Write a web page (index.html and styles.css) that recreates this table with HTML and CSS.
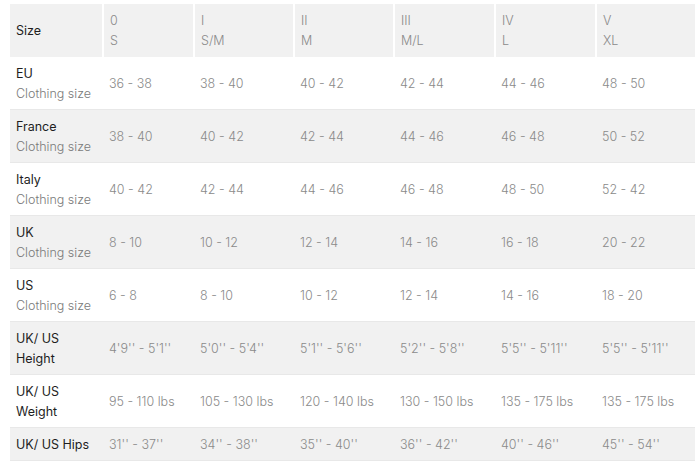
FILE: index.html
```html
<!DOCTYPE html>
<html>
<head>
<meta charset="utf-8">
<link rel="stylesheet" href="styles.css">
</head>
<body>
<table class="size-table">
  <colgroup>
    <col class="c0"><col class="c1"><col class="c2"><col class="c3"><col class="c4"><col class="c5"><col class="c6">
  </colgroup>
  <thead>
    <tr>
      <th class="label">Size</th>
      <th>0<br>S</th>
      <th>I<br>S/M</th>
      <th>II<br>M</th>
      <th>III<br>M/L</th>
      <th>IV<br>L</th>
      <th>V<br>XL</th>
    </tr>
  </thead>
  <tbody>
    <tr>
      <td class="label">EU<br><span class="sub">Clothing size</span></td>
      <td>36 - 38</td><td>38 - 40</td><td>40 - 42</td><td>42 - 44</td><td>44 - 46</td><td>48 - 50</td>
    </tr>
    <tr class="alt">
      <td class="label">France<br><span class="sub">Clothing size</span></td>
      <td>38 - 40</td><td>40 - 42</td><td>42 - 44</td><td>44 - 46</td><td>46 - 48</td><td>50 - 52</td>
    </tr>
    <tr>
      <td class="label">Italy<br><span class="sub">Clothing size</span></td>
      <td>40 - 42</td><td>42 - 44</td><td>44 - 46</td><td>46 - 48</td><td>48 - 50</td><td>52 - 42</td>
    </tr>
    <tr class="alt">
      <td class="label">UK<br><span class="sub">Clothing size</span></td>
      <td>8 - 10</td><td>10 - 12</td><td>12 - 14</td><td>14 - 16</td><td>16 - 18</td><td>20 - 22</td>
    </tr>
    <tr>
      <td class="label">US<br><span class="sub">Clothing size</span></td>
      <td>6 - 8</td><td>8 - 10</td><td>10 - 12</td><td>12 - 14</td><td>14 - 16</td><td>18 - 20</td>
    </tr>
    <tr class="alt">
      <td class="label">UK/ US<br>Height</td>
      <td>4'9'' - 5'1''</td><td>5'0'' - 5'4''</td><td>5'1'' - 5'6''</td><td>5'2'' - 5'8''</td><td>5'5'' - 5'11''</td><td>5'5'' - 5'11''</td>
    </tr>
    <tr>
      <td class="label">UK/ US<br>Weight</td>
      <td>95 - 110 lbs</td><td>105 - 130 lbs</td><td>120 - 140 lbs</td><td>130 - 150 lbs</td><td>135 - 175 lbs</td><td>135 - 175 lbs</td>
    </tr>
    <tr class="alt">
      <td class="label">UK/ US Hips</td>
      <td>31'' - 37''</td><td>34'' - 38''</td><td>35'' - 40''</td><td>36'' - 42''</td><td>40'' - 46''</td><td>45'' - 54''</td>
    </tr>
  </tbody>
</table>
</body>
</html>
```

FILE: styles.css
```css
html, body {
  margin: 0;
  padding: 0;
  background: #fff;
}
body {
  padding: 4px 5px 0 10px;
  font-family: "Inter", "Liberation Sans", sans-serif;
  font-size: 12.5px;
  line-height: 20px;
}
.size-table {
  width: 685px;
  border-collapse: collapse;
  table-layout: fixed;
}
.c0 { width: 93px; }
.c1 { width: 91px; }
.c2 { width: 100px; }
.c3 { width: 100px; }
.c4 { width: 101px; }
.c5 { width: 101px; }
.c6 { width: 99px; }

.size-table th,
.size-table td {
  padding: 7px 6px 5px 6px;
  text-align: left;
  vertical-align: middle;
  font-weight: 300;
  color: #8a8a8a;
  white-space: nowrap;
}
.size-table thead th {
  background: #f1f1f1;
  border-left: 2px solid #fff;
  padding-top: 7px;
  padding-bottom: 6px;
}
.size-table thead th:first-child {
  border-left: 0;
}
.size-table tbody tr {
  border-bottom: 1px solid #e8e8e8;
}
.size-table tbody tr.alt {
  background: #f1f1f1;
}
.size-table .label {
  color: #1e1e1e;
  font-weight: 400;
}
.size-table .sub {
  color: #7a7a7a;
  font-weight: 300;
}
```
